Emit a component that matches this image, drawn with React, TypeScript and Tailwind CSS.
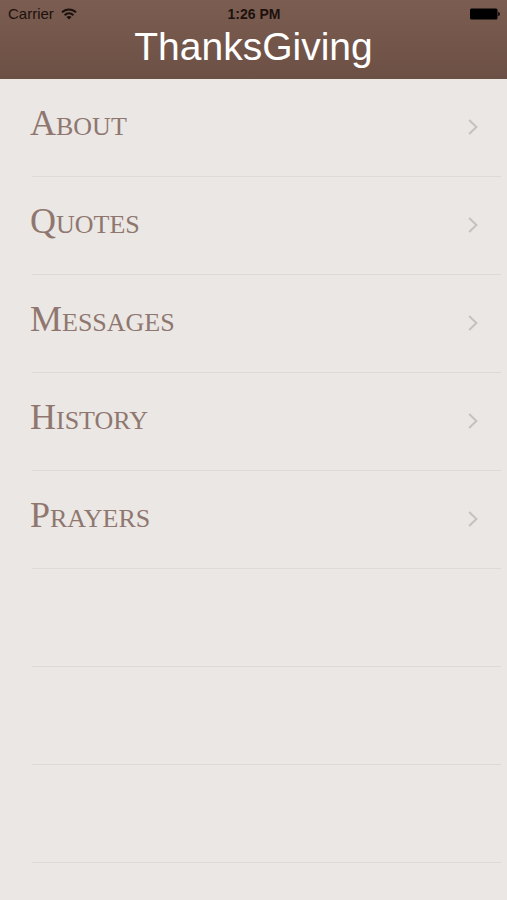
const sections = ["About", "Quotes", "Messages", "History", "Prayers"];
const emptyRows = [0, 1, 2];

function WifiIcon() {
  return (
    <svg viewBox="0 0 16 12" className="h-3 w-4" fill="none" stroke="currentColor" strokeWidth="2" aria-hidden="true">
      <path d="M1 4.4C5 .4 11 .4 15 4.4" />
      <path d="M3.6 7.2C6.2 4.6 9.8 4.6 12.4 7.2" />
      <path d="M8 11.6 5.4 8.9C6.9 7.6 9.1 7.6 10.6 8.9Z" fill="currentColor" stroke="none" />
    </svg>
  );
}

function BatteryIcon() {
  return (
    <svg viewBox="0 0 30 12" className="h-3 w-[30px]" fill="currentColor" role="img" aria-label="Battery full">
      <rect x="0" y="0.5" width="27.5" height="11" rx="1.5" />
      <path d="M28.2 4v4c1 0 1.6-.9 1.6-2s-.6-2-1.6-2Z" />
    </svg>
  );
}

function ChevronIcon() {
  return (
    <svg viewBox="0 0 10 16" className="h-4 w-[10px] shrink-0 text-[#c5c1be]" fill="none" stroke="currentColor" strokeWidth="2" aria-hidden="true">
      <path d="M1.2 1 8.4 8 1.2 15" />
    </svg>
  );
}

function StatusBar() {
  return (
    <div className="grid h-7 grid-cols-3 items-center pr-[7px] pl-2 text-[15px] leading-7 text-[#1c110d]">
      <div className="flex items-center gap-[7px]">
        <span>Carrier</span>
        <WifiIcon />
      </div>
      <span className="text-center text-sm leading-7 font-bold">1:26 PM</span>
      <div className="flex justify-end text-black">
        <BatteryIcon />
      </div>
    </div>
  );
}

function MenuRow({ label }: { label: string }) {
  return (
    <li className="ml-8 mr-[6px] h-[98px] border-b border-[#dedad7]">
      <a href={`#${label.toLowerCase()}`} className="-ml-[2px] flex h-full items-center justify-between pr-[23px] pb-[2px]">
        <span className="pb-1 font-['Liberation_Serif',serif] text-[26px] leading-10 text-[#8f776f] uppercase first-letter:text-[36px]">
          {label}
        </span>
        <ChevronIcon />
      </a>
    </li>
  );
}

export default function App() {
  return (
    <div className="min-h-screen bg-[#ebe7e4] font-['Liberation_Sans',Arial,sans-serif]">
      <header className="h-[79px] bg-linear-to-b from-[#7b5d51] to-[#6d5045]">
        <StatusBar />
        <h1 className="text-center text-[39px] leading-[38px] text-white">ThanksGiving</h1>
      </header>
      <nav>
        <ul>
          {sections.map((label) => (
            <MenuRow key={label} label={label} />
          ))}
          {emptyRows.map((row) => (
            <li key={row} className="ml-8 mr-[6px] h-[98px] border-b border-[#dedad7]" aria-hidden="true" />
          ))}
        </ul>
      </nav>
    </div>
  );
}
